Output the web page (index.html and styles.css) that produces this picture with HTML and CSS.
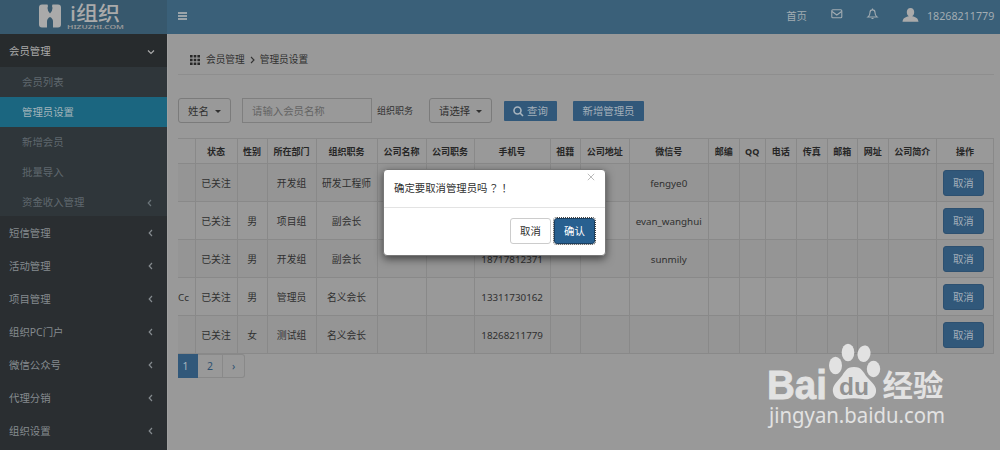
FILE: index.html
```
<!DOCTYPE html>
<html lang="zh-CN">
<head>
<meta charset="utf-8">
<title>管理员设置</title>
<link rel="stylesheet" href="styles.css">
</head>
<body>
<div class="app">
  <header class="topbar">
    <div class="brand">
      <svg width="88" height="28" viewBox="0 0 88 28">
        <path class="logo-fill" d="M3 1.500h5.500q1 1 0 3.500 0 3 2.500 5.500Q13.500 8 13.500 5q-1-2.500 0-3.500H19q3 0 3 3v17q0 3-3 3h-5v-6q0-3-3-4.500-3 1.500-3 4.500v6H3q-3 0-3-3v-17q0-3 3-3z"/>
        <text class="logo-name" x="31" y="18" textLength="50" lengthAdjust="spacingAndGlyphs">i组织</text>
        <text class="logo-url" x="28" y="25.500" textLength="57" lengthAdjust="spacingAndGlyphs">HIZUZHI.COM</text>
      </svg>
    </div>
    <div class="toolbar">
      <svg class="burger" width="9" height="9" viewBox="0 0 9 9"><path d="M0 1h9M0 4h9M0 7h9"/></svg>
      <div class="tools">
        <span class="home">首页</span>
        <svg class="mail" width="12" height="10" viewBox="0 0 12 10"><rect x=".8" y=".8" width="10" height="8" rx="1"/><path d="M1 2.500l4.800 3.500 4.800-3.500"/></svg>
        <svg class="bell" width="11" height="12" viewBox="0 0 11 12"><path d="M1 9q2-1.500 2-4.500 0-2.600 2.500-2.600T8 4.500Q8 7.500 10 9zM5.500 2V.5M4.500 10.500h2"/></svg>
        <svg class="user" width="17" height="15" viewBox="0 0 17 15"><path d="M8.500 0C6 0 4.800 1.800 4.800 4c0 2 .8 3.600 2 4.300C3 9.300 1 10 .5 13.800h16c-.5-3.800-2.500-4.500-6.300-5.500 1.200-.7 2-2.300 2-4.300C12.200 1.800 11 0 8.500 0z"/></svg>
        <span class="account">18268211779</span>
      </div>
    </div>
  </header>
  <div class="body">
    <nav class="sidebar">
      <div class="item open">会员管理<svg width="8" height="8" viewBox="0 0 8 8"><path d="M1 2.500l3 3 3-3"/></svg></div>
      <div class="submenu">
        <div class="sub">会员列表</div>
        <div class="sub active">管理员设置</div>
        <div class="sub">新增会员</div>
        <div class="sub">批量导入</div>
        <div class="sub">资金收入管理<svg width="8" height="8" viewBox="0 0 8 8"><path d="M5 1L2.200 4 5 7"/></svg></div>
      </div>
      <div class="item">短信管理<svg width="8" height="8" viewBox="0 0 8 8"><path d="M5 1L2.200 4 5 7"/></svg></div>
      <div class="item">活动管理<svg width="8" height="8" viewBox="0 0 8 8"><path d="M5 1L2.200 4 5 7"/></svg></div>
      <div class="item">项目管理<svg width="8" height="8" viewBox="0 0 8 8"><path d="M5 1L2.200 4 5 7"/></svg></div>
      <div class="item">组织PC门户<svg width="8" height="8" viewBox="0 0 8 8"><path d="M5 1L2.200 4 5 7"/></svg></div>
      <div class="item">微信公众号<svg width="8" height="8" viewBox="0 0 8 8"><path d="M5 1L2.200 4 5 7"/></svg></div>
      <div class="item">代理分销<svg width="8" height="8" viewBox="0 0 8 8"><path d="M5 1L2.200 4 5 7"/></svg></div>
      <div class="item">组织设置<svg width="8" height="8" viewBox="0 0 8 8"><path d="M5 1L2.200 4 5 7"/></svg></div>
    </nav>
    <main class="content">
      <div class="crumbs">
        <svg class="grid-icon" width="10" height="10" viewBox="0 0 10 10"><path d="M0 0h2.600v2.600H0zM3.700 0h2.600v2.600H3.700zM7.400 0H10v2.600H7.400zM0 3.700h2.600v2.600H0zM3.700 3.700h2.600v2.600H3.700zM7.400 3.700H10v2.600H7.400zM0 7.400h2.600V10H0zM3.700 7.400h2.600V10H3.700zM7.400 7.400H10V10H7.400z"/></svg>
        <span>会员管理</span>
        <svg class="sep" width="5" height="8" viewBox="0 0 5 8"><path d="M1 1l3 3-3 3"/></svg>
        <span>管理员设置</span>
      </div>
      <div class="filters">
        <div class="select name-select">姓名<i class="caret"></i></div>
        <div class="field">请输入会员名称</div>
        <span class="label">组织职务</span>
        <div class="select role-select">请选择<i class="caret"></i></div>
        <div class="btn search"><svg width="11" height="11" viewBox="0 0 11 11"><circle cx="4.500" cy="4.500" r="3.500"/><path d="M7 7l3 3"/></svg>查询</div>
        <div class="btn add">新增管理员</div>
      </div>
      <table class="members">
        <colgroup><col class="w17"><col class="w42"><col class="w30"><col class="w49"><col class="w61"><col class="w49"><col class="w48"><col class="w76"><col class="w30"><col class="w49"><col class="w79"><col class="w31"><col class="w26"><col class="w31"><col class="w31"><col class="w30"><col class="w31"><col class="w48"><col class="w57"></colgroup>
        <thead><tr><th></th><th>状态</th><th>性别</th><th>所在部门</th><th>组织职务</th><th>公司名称</th><th>公司职务</th><th>手机号</th><th>祖籍</th><th>公司地址</th><th>微信号</th><th>邮编</th><th>QQ</th><th>电话</th><th>传真</th><th>邮箱</th><th>网址</th><th>公司简介</th><th>操作</th></tr></thead>
        <tbody>
          <tr><td></td><td>已关注</td><td></td><td>开发组</td><td>研发工程师</td><td></td><td></td><td></td><td></td><td></td><td>fengye0</td><td></td><td></td><td></td><td></td><td></td><td></td><td></td><td class="act"><span class="row-btn">取消</span></td></tr>
          <tr><td></td><td>已关注</td><td>男</td><td>项目组</td><td>副会长</td><td></td><td></td><td></td><td></td><td></td><td>evan_wanghui</td><td></td><td></td><td></td><td></td><td></td><td></td><td></td><td class="act"><span class="row-btn">取消</span></td></tr>
          <tr><td></td><td>已关注</td><td>男</td><td>开发组</td><td>副会长</td><td></td><td></td><td>18717812371</td><td></td><td></td><td>sunmily</td><td></td><td></td><td></td><td></td><td></td><td></td><td></td><td class="act"><span class="row-btn">取消</span></td></tr>
          <tr><td class="clip">Cc</td><td>已关注</td><td>男</td><td>管理员</td><td>名义会长</td><td></td><td></td><td>13311730162</td><td></td><td></td><td></td><td></td><td></td><td></td><td></td><td></td><td></td><td></td><td class="act"><span class="row-btn">取消</span></td></tr>
          <tr><td></td><td>已关注</td><td>女</td><td>测试组</td><td>名义会长</td><td></td><td></td><td>18268211779</td><td></td><td></td><td></td><td></td><td></td><td></td><td></td><td></td><td></td><td></td><td class="act"><span class="row-btn">取消</span></td></tr>
        </tbody>
      </table>
      <div class="pager"><span class="page current">1</span><span class="page two">2</span><span class="page next">›</span></div>
    </main>
  </div>
</div>
<div class="dialog">
  <div class="dialog-head">
    <span class="question">确定要取消管理员吗<span class="marks" lang="zh-TW">？！</span></span>
    <svg class="close" width="8" height="8" viewBox="0 0 8 8"><path d="M.8.8l6.400 6.400M7.200.8L.8 7.200"/></svg>
  </div>
  <div class="dialog-foot">
    <span class="dlg-btn">取消</span>
    <span class="dlg-btn confirm">确认</span>
  </div>
</div>
<svg class="watermark" width="190" height="106" viewBox="0 0 190 106">
  <text class="wm-bai" x="4" y="58.500" textLength="60" lengthAdjust="spacingAndGlyphs">Bai</text>
  <ellipse cx="72.500" cy="25.500" rx="6.500" ry="8.700"/>
  <ellipse cx="85" cy="12.500" rx="6.300" ry="8.700"/>
  <ellipse cx="101" cy="13.700" rx="6.500" ry="8.300" transform="rotate(12 101 13.700)"/>
  <ellipse cx="110.500" cy="29" rx="6.700" ry="8.300"/>
  <path d="M91 27c-8 0-9 5-13 10-5 6-9 9-8 15 1 6 6 8 11 7 7-1 13-1 19 0 6 1 12-1 13-7 1-6-4-9-9-15-4-5-5-10-13-10z"/>
  <text class="wm-du" x="76" y="55" textLength="30" lengthAdjust="spacingAndGlyphs">du</text>
  <text class="wm-cn" x="119.500" y="56" textLength="61" lengthAdjust="spacingAndGlyphs">经验</text>
  <text class="wm-url" x="6" y="82.500" textLength="176" lengthAdjust="spacingAndGlyphs">jingyan.baidu.com</text>
</svg>
</body>
</html>
```
FILE: styles.css
```
* { box-sizing: border-box; }
body {
  margin: 0;
  width: 1000px;
  height: 450px;
  overflow: hidden;
  background: #999;
  color: #303030;
  font: 10.4px/1.4 "Noto Sans", "Noto Sans CJK SC", sans-serif;
}
svg { display: block; flex: none; overflow: visible; }
.app { display: flex; flex-direction: column; height: 450px; }
.topbar { display: flex; height: 34px; flex: none; }
.brand { width: 167px; padding: 3px 0 0 39px; background: #37586d; }
.logo-fill { fill: #aaa; }
.logo-name { fill: #aaa; font-size: 20px; font-weight: 500; }
.logo-url { fill: #999; font-size: 5.5px; font-weight: 600; }
.toolbar {
  flex: 1;
  display: flex;
  justify-content: space-between;
  padding: 0 5px 0 11px;
  background: #3a6079;
  color: #a2acb2;
}
.burger { margin-top: 12px; stroke: #bbb; stroke-width: 1.3; }
.tools { display: flex; align-items: flex-start; }
.home { margin-top: 9px; }
.mail { margin: 9px 0 0 24px; fill: none; stroke: #a2acb2; stroke-width: 1.1; }
.bell { margin: 8px 0 0 24px; fill: none; stroke: #a2acb2; stroke-width: 1.1; }
.user { margin: 8px 0 0 24px; fill: #aaa; }
.account { width: 68px; margin: 9px 0 0 8px; font-size: 10.7px; }

.body { display: flex; flex: 1; min-height: 0; }
.sidebar { width: 167px; flex: none; background: #2a2e31; color: #858b8f; }
.item, .sub { display: flex; justify-content: space-between; align-items: center; }
.item { height: 32.9px; padding: 2px 12px 0 9px; }
.item.open { height: 33px; background: #272b2d; color: #aaa; }
.item svg, .sub svg { fill: none; stroke: #858b8f; stroke-width: 1.2; }
.item.open svg { stroke: #aaa; }
.submenu { height: 149px; background: #2f363a; }
.sub { height: 30px; padding: 1px 13px 0 22px; color: #5f686e; }
.sub svg { stroke: #6b7479; }
.sub.active { background: #1b6680; color: #a2b4ba; }

.content { flex: 1; min-width: 0; padding-left: 10px; border-left: 1px solid #a0a0a0; }
.crumbs {
  display: flex;
  align-items: center;
  height: 41px;
  width: 816px;
  padding: 11px 0 0 12px;
  border-bottom: 1px solid #8e8e8e;
  font-size: 9.7px;
}
.grid-icon { margin-right: 6px; fill: #282828; }
.sep { margin: 0 5px; fill: none; stroke: #333; stroke-width: 1.1; }
.filters { display: flex; align-items: center; height: 25px; margin-top: 23px; }
.select {
  display: flex;
  align-items: center;
  justify-content: space-between;
  height: 25px;
  padding: 1px 9px 0 9px;
  border: 1px solid #7b7b7b;
  border-radius: 3px;
}
.name-select { width: 53px; }
.role-select { width: 63px; margin-left: 16px; }
.caret { border: 3px solid transparent; border-top-color: #303030; border-bottom: 0; }
.field {
  width: 130px;
  height: 25px;
  margin-left: 11px;
  padding: 5px 9px 0;
  border: 1px solid #7f7f7f;
  color: #646464;
}
.label { width: 36px; margin: 2px 0 0 5px; font-size: 9px; white-space: nowrap; }
.btn {
  display: flex;
  align-items: center;
  justify-content: center;
  gap: 3px;
  height: 20px;
  padding-top: 1px;
  background: #31587a;
  color: #a3afb9;
  border-radius: 1px;
}
.btn svg { fill: none; stroke: #a8b4be; stroke-width: 1.6; }
.search { width: 53px; margin-left: 12px; }
.add { width: 71px; margin-left: 16px; }

.members {
  width: 816px;
  margin-top: 15px;
  table-layout: fixed;
  border-collapse: collapse;
  font-size: 9.8px;
  line-height: 14px;
  text-align: center;
}
.members th, .members td { padding: 0; border: 1px solid #898989; white-space: nowrap; }
.members th { height: 25px; padding-top: 1px; font-size: 9px; color: #262626; }
.members td { height: 38px; padding-top: 2px; }
.members .act { padding-top: 0; }
.members th:first-child, .members td:first-child { border-left: 0; }
.members tbody tr:nth-child(odd) { background: #959595; }
.members .clip { text-align: left; }
.w17 { width: 17px; } .w26 { width: 26px; } .w30 { width: 30px; } .w31 { width: 31px; }
.w42 { width: 42px; } .w48 { width: 48px; } .w49 { width: 49px; } .w57 { width: 57px; }
.w61 { width: 61px; } .w76 { width: 76px; } .w79 { width: 79px; }
.row-btn {
  display: block;
  width: 41px;
  height: 26px;
  margin-left: 6px;
  border: 1px solid #2d5070;
  border-radius: 3px;
  background: #31587a;
  color: #a3afb9;
  font-size: 10.4px;
  line-height: 25px;
}
.pager { display: flex; height: 24px; }
.page {
  border: 1px solid #898989;
  border-left: 0;
  color: #2d5070;
  line-height: 23px;
  text-align: center;
}
.current { width: 20px; padding-right: 4px; border-color: #31587a; background: #31587a; color: #a8b4be; }
.two { width: 25px; }
.next { width: 22px; border-radius: 0 3px 3px 0; }

.dialog {
  position: absolute;
  left: 383px;
  top: 169px;
  width: 223px;
  height: 87px;
  border: 1px solid #777;
  border-radius: 4px;
  background: #fff;
  box-shadow: 0 3px 8px rgba(0, 0, 0, .55);
}
.dialog-head {
  display: flex;
  justify-content: space-between;
  height: 38px;
  padding: 11px 10px 0;
  border-bottom: 1px solid #e3e3e3;
  white-space: nowrap;
}
.marks { font-family: "Noto Sans CJK TC", sans-serif; margin-left: 1px; }
.close { margin-top: -8px; stroke: #bbb; stroke-width: 1; }
.dialog-foot { display: flex; justify-content: flex-end; gap: 3px; padding: 10px 10px 0; }
.dlg-btn {
  width: 41px;
  height: 26px;
  border: 1px solid #ccc;
  border-radius: 3px;
  line-height: 25px;
  text-align: center;
}
.confirm { border-color: #1b3f60; background: #286090; color: #fff; outline: 1px dotted #444; }

.watermark { position: absolute; left: 763px; top: 340px; fill: #e2e2e2; }
.wm-bai { font: bold 41px "Liberation Sans", sans-serif; stroke: #e2e2e2; stroke-width: .8; }
.wm-du { font: bold 24px "Liberation Sans", sans-serif; fill: #929292; }
.wm-cn { font: bold 30px "Noto Sans CJK SC", sans-serif; }
.wm-url { font-size: 22px; }
```
